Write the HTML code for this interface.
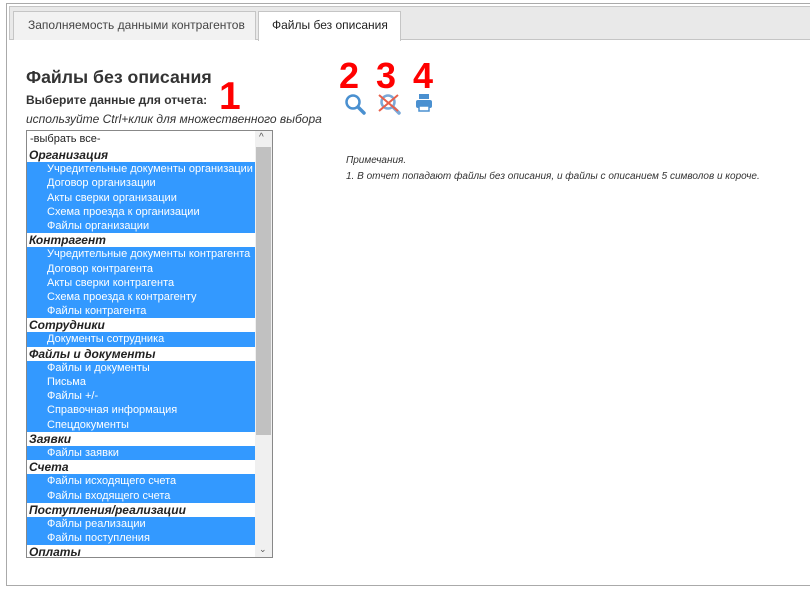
<!DOCTYPE html>
<html><head><meta charset="utf-8"><style>
*{margin:0;padding:0;box-sizing:border-box}
body{width:810px;height:590px;background:#fff;font-family:"Liberation Sans",Arial,sans-serif;position:relative;overflow:hidden;color:#333}
.frame{position:absolute;left:6px;top:3px;width:810px;height:583px;border:1px solid #aaa}
.tabbar{position:absolute;left:9px;top:6px;width:801px;height:34px;background:#e9e9e9;border:1px solid #c5c5c5;border-right:none}
.tab{position:absolute;top:4px;height:29px;border:1px solid #c5c5c5;border-bottom:none;font-size:12px;line-height:27px;color:#454545}
.t1{left:3px;width:243px;background:#f2f2f2;padding-left:14px}
.t2{left:248px;width:143px;background:#fff;height:30px;padding-left:13px;color:#222}
.abs{position:absolute;white-space:nowrap}
h1{font-size:17.7px;font-weight:bold;color:#333}
.red{color:#f00;font-weight:bold;font-size:36px;font-family:"Liberation Sans",Arial,sans-serif;line-height:normal}
.list{position:absolute;left:26px;top:130px;width:247px;height:428px;border:1px solid #888;overflow:hidden;font-size:11px}
.row{height:14.2px;line-height:14px;white-space:nowrap;color:#222;padding-left:3px;width:228px}
.row.s{background:#3399ff;color:#fff;padding-left:20px}
.row.h{font-weight:bold;font-style:italic;font-size:12px;padding-left:2px;color:#222}
.sb{position:absolute;right:0;top:0;width:17px;height:100%;background:#f0f0f0}
.thumb{position:absolute;left:1px;top:16px;width:15px;height:288px;background:#c1c1c1}
.note{font-size:10px;font-style:italic;color:#333}
</style></head><body>
<div class="frame"></div>
<div class="tabbar">
<div class="tab t1">Заполняемость данными контрагентов</div>
<div class="tab t2">Файлы без описания</div>
</div>
<h1 class="abs" style="left:26px;top:67px">Файлы без описания</h1>
<div class="abs" style="left:26px;top:93px;font-size:12px;font-weight:bold">Выберите данные для отчета:</div>
<div class="abs" style="left:26px;top:112px;font-size:12px;font-style:italic">используйте Ctrl+клик для множественного выбора</div>
<div class="abs red" style="left:219px;top:75px;font-size:39px">1</div>
<div class="abs red" style="left:339px;top:55px">2</div>
<div class="abs red" style="left:376px;top:55px">3</div>
<div class="abs red" style="left:413px;top:55px">4</div>
<svg class="abs" style="left:343px;top:92px" width="90" height="24" viewBox="0 0 90 24">
<g fill="none" stroke="#4a90d0" stroke-width="2.5"><circle cx="10" cy="10" r="6.5"/><line x1="15" y1="15" x2="21" y2="21" stroke-width="3.5" stroke-linecap="round"/></g>
<g fill="none" stroke="#7aa8d8" stroke-width="2.5"><circle cx="45" cy="10" r="6.5"/><line x1="50" y1="15" x2="56" y2="21" stroke-width="3.5" stroke-linecap="round"/></g>
<g stroke="#e8604a" stroke-width="2"><line x1="36" y1="3" x2="55" y2="19"/><line x1="55" y1="3" x2="36" y2="19"/></g>
<g fill="#4a90d0"><rect x="76" y="2" width="10" height="5"/><rect x="73" y="8" width="16" height="8" rx="2"/><rect x="76" y="14" width="10" height="5" fill="#fff" stroke="#4a90d0" stroke-width="1.5"/></g>
</svg>
<div class="list">
<div class="row" style="height:17px;line-height:16px">-выбрать все-</div>
<div class="row h">Организация</div>
<div class="row s">Учредительные документы организации</div>
<div class="row s">Договор организации</div>
<div class="row s">Акты сверки организации</div>
<div class="row s">Схема проезда к организации</div>
<div class="row s">Файлы организации</div>
<div class="row h">Контрагент</div>
<div class="row s">Учредительные документы контрагента</div>
<div class="row s">Договор контрагента</div>
<div class="row s">Акты сверки контрагента</div>
<div class="row s">Схема проезда к контрагенту</div>
<div class="row s">Файлы контрагента</div>
<div class="row h">Сотрудники</div>
<div class="row s">Документы сотрудника</div>
<div class="row h">Файлы и документы</div>
<div class="row s">Файлы и документы</div>
<div class="row s">Письма</div>
<div class="row s">Файлы +/-</div>
<div class="row s">Справочная информация</div>
<div class="row s">Спецдокументы</div>
<div class="row h">Заявки</div>
<div class="row s">Файлы заявки</div>
<div class="row h">Счета</div>
<div class="row s">Файлы исходящего счета</div>
<div class="row s">Файлы входящего счета</div>
<div class="row h">Поступления/реализации</div>
<div class="row s">Файлы реализации</div>
<div class="row s">Файлы поступления</div>
<div class="row h">Оплаты</div>
<div class="sb"><div class="thumb"></div>
<div style="position:absolute;top:1px;left:4px;font-size:10px;color:#555">&#94;</div>
<div style="position:absolute;bottom:2px;left:4px;font-size:9px;color:#555">&#8964;</div></div>
</div>
<div class="abs note" style="left:346px;top:155px">Примечания.</div>
<div class="abs note" style="left:346px;top:171px">1. В отчет попадают файлы без описания, и файлы с описанием 5 символов и короче.</div>
</body></html>
